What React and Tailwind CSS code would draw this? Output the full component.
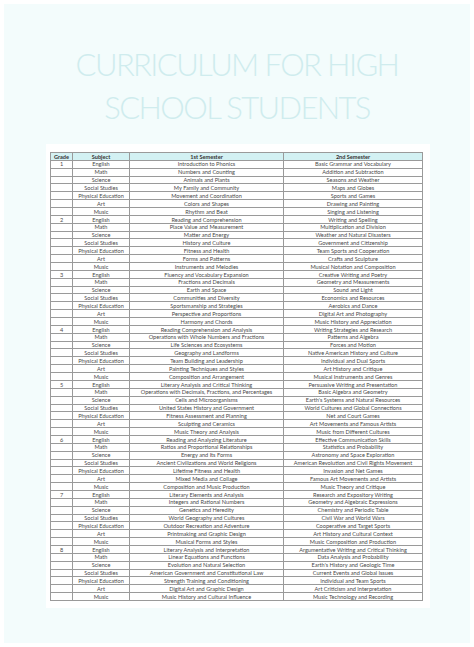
import React from 'react';

const grades = [
  [
    ['English', 'Introduction to Phonics', 'Basic Grammar and Vocabulary'],
    ['Math', 'Numbers and Counting', 'Addition and Subtraction'],
    ['Science', 'Animals and Plants', 'Seasons and Weather'],
    ['Social Studies', 'My Family and Community', 'Maps and Globes'],
    ['Physical Education', 'Movement and Coordination', 'Sports and Games'],
    ['Art', 'Colors and Shapes', 'Drawing and Painting'],
    ['Music', 'Rhythm and Beat', 'Singing and Listening'],
  ],
  [
    ['English', 'Reading and Comprehension', 'Writing and Spelling'],
    ['Math', 'Place Value and Measurement', 'Multiplication and Division'],
    ['Science', 'Matter and Energy', 'Weather and Natural Disasters'],
    ['Social Studies', 'History and Culture', 'Government and Citizenship'],
    ['Physical Education', 'Fitness and Health', 'Team Sports and Cooperation'],
    ['Art', 'Forms and Patterns', 'Crafts and Sculpture'],
    ['Music', 'Instruments and Melodies', 'Musical Notation and Composition'],
  ],
  [
    ['English', 'Fluency and Vocabulary Expansion', 'Creative Writing and Poetry'],
    ['Math', 'Fractions and Decimals', 'Geometry and Measurements'],
    ['Science', 'Earth and Space', 'Sound and Light'],
    ['Social Studies', 'Communities and Diversity', 'Economics and Resources'],
    ['Physical Education', 'Sportsmanship and Strategies', 'Aerobics and Dance'],
    ['Art', 'Perspective and Proportions', 'Digital Art and Photography'],
    ['Music', 'Harmony and Chords', 'Music History and Appreciation'],
  ],
  [
    ['English', 'Reading Comprehension and Analysis', 'Writing Strategies and Research'],
    ['Math', 'Operations with Whole Numbers and Fractions', 'Patterns and Algebra'],
    ['Science', 'Life Sciences and Ecosystems', 'Forces and Motion'],
    ['Social Studies', 'Geography and Landforms', 'Native American History and Culture'],
    ['Physical Education', 'Team Building and Leadership', 'Individual and Dual Sports'],
    ['Art', 'Painting Techniques and Styles', 'Art History and Critique'],
    ['Music', 'Composition and Arrangement', 'Musical Instruments and Genres'],
  ],
  [
    ['English', 'Literary Analysis and Critical Thinking', 'Persuasive Writing and Presentation'],
    ['Math', 'Operations with Decimals, Fractions, and Percentages', 'Basic Algebra and Geometry'],
    ['Science', 'Cells and Microorganisms', "Earth's Systems and Natural Resources"],
    ['Social Studies', 'United States History and Government', 'World Cultures and Global Connections'],
    ['Physical Education', 'Fitness Assessment and Planning', 'Net and Court Games'],
    ['Art', 'Sculpting and Ceramics', 'Art Movements and Famous Artists'],
    ['Music', 'Music Theory and Analysis', 'Music from Different Cultures'],
  ],
  [
    ['English', 'Reading and Analyzing Literature', 'Effective Communication Skills'],
    ['Math', 'Ratios and Proportional Relationships', 'Statistics and Probability'],
    ['Science', 'Energy and Its Forms', 'Astronomy and Space Exploration'],
    ['Social Studies', 'Ancient Civilizations and World Religions', 'American Revolution and Civil Rights Movement'],
    ['Physical Education', 'Lifetime Fitness and Health', 'Invasion and Net Games'],
    ['Art', 'Mixed Media and Collage', 'Famous Art Movements and Artists'],
    ['Music', 'Composition and Music Production', 'Music Theory and Critique'],
  ],
  [
    ['English', 'Literary Elements and Analysis', 'Research and Expository Writing'],
    ['Math', 'Integers and Rational Numbers', 'Geometry and Algebraic Expressions'],
    ['Science', 'Genetics and Heredity', 'Chemistry and Periodic Table'],
    ['Social Studies', 'World Geography and Cultures', 'Civil War and World Wars'],
    ['Physical Education', 'Outdoor Recreation and Adventure', 'Cooperative and Target Sports'],
    ['Art', 'Printmaking and Graphic Design', 'Art History and Cultural Context'],
    ['Music', 'Musical Forms and Styles', 'Music Composition and Production'],
  ],
  [
    ['English', 'Literary Analysis and Interpretation', 'Argumentative Writing and Critical Thinking'],
    ['Math', 'Linear Equations and Functions', 'Data Analysis and Probability'],
    ['Science', 'Evolution and Natural Selection', "Earth's History and Geologic Time"],
    ['Social Studies', 'American Government and Constitutional Law', 'Current Events and Global Issues'],
    ['Physical Education', 'Strength Training and Conditioning', 'Individual and Team Sports'],
    ['Art', 'Digital Art and Graphic Design', 'Art Criticism and Interpretation'],
    ['Music', 'Music History and Cultural Influence', 'Music Technology and Recording'],
  ],
];

export default function App() {
  const cell = 'border border-[#9a9a9a] p-0 text-center whitespace-nowrap overflow-visible';
  return (
    <div className="w-[474px] h-[647px] bg-white p-[4px]" style={{ fontFamily: 'Lato, "Noto Sans", sans-serif' }}>
      <div className="h-full bg-[#f3fcfc] flex flex-col items-center">
        <h1 className="mt-[39px] text-center text-[31px] leading-[43px] font-light text-[#cfecee] tracking-[-1.6px]">
          CURRICULUM FOR HIGH
          <br />
          SCHOOL STUDENTS
        </h1>
        <div className="mt-[15px] bg-white pt-[8px] pb-[7px] pl-[4px] pr-[7px] ml-[2px]">
          <table className="border-collapse table-fixed w-[372px] text-[5.6px] text-[#4a4a4a]">
            <colgroup>
              <col className="w-[22px]" />
              <col className="w-[57px]" />
              <col className="w-[154px]" />
              <col className="w-[139px]" />
            </colgroup>
            <thead>
              <tr className="h-[7.86px] bg-[#d3f1f3] text-[#333] font-bold leading-none">
                <th className={cell}>Grade</th>
                <th className={cell}>Subject</th>
                <th className={cell}>1st Semester</th>
                <th className={cell}>2nd Semester</th>
              </tr>
            </thead>
            <tbody>
              {grades.map((rows, g) =>
                rows.map((r, i) => (
                  <tr key={`${g}-${i}`} className="h-[7.86px] leading-none">
                    <td className={cell}>{i === 0 ? g + 1 : ''}</td>
                    <td className={cell}>{r[0]}</td>
                    <td className={cell}>{r[1]}</td>
                    <td className={cell}>{r[2]}</td>
                  </tr>
                ))
              )}
            </tbody>
          </table>
        </div>
      </div>
    </div>
  );
}
